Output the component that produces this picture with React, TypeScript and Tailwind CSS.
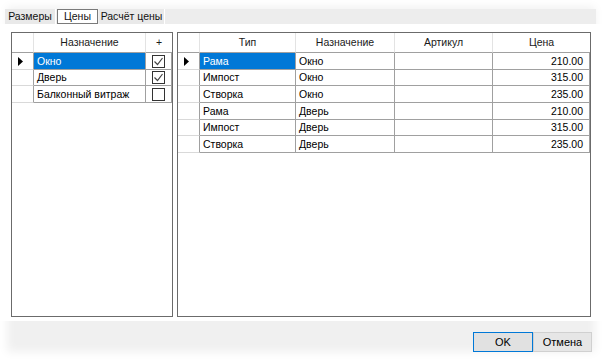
import { Fragment } from 'react';

const purposes = [
  { name: 'Окно', checked: true },
  { name: 'Дверь', checked: true },
  { name: 'Балконный витраж', checked: false },
];

const prices = [
  { type: 'Рама', purpose: 'Окно', article: '', price: '210.00' },
  { type: 'Импост', purpose: 'Окно', article: '', price: '315.00' },
  { type: 'Створка', purpose: 'Окно', article: '', price: '235.00' },
  { type: 'Рама', purpose: 'Дверь', article: '', price: '210.00' },
  { type: 'Импост', purpose: 'Дверь', article: '', price: '315.00' },
  { type: 'Створка', purpose: 'Дверь', article: '', price: '235.00' },
];

// 17/16/17 so that six rows come out near 100px like the original
const rowHeight = (i: number) => (i % 3 === 1 ? 'h-[16px]' : 'h-[17px]');

function RowArrow() {
  return (
    <svg width="5" height="9" viewBox="0 0 5 9" className="ml-[6px]">
      <path d="M0 0 L5 4.5 L0 9 Z" fill="#000" />
    </svg>
  );
}

function CheckBox({ checked }: { checked: boolean }) {
  return (
    <div className="w-[13px] h-[13px] border border-[#333] bg-white flex items-center justify-center">
      {checked && (
        <svg width="11" height="11" viewBox="0 0 11 11">
          <path d="M1.5 5.5 L4.5 8.5 L9.5 2" fill="none" stroke="#444" strokeWidth="1.2" />
        </svg>
      )}
    </div>
  );
}

function HeaderCell({ w, children, last }: { w: string; children?: React.ReactNode; last?: boolean }) {
  return (
    <div
      className={`${w} flex items-center justify-center border-b border-[#a0a0a0] ${
        last ? '' : 'border-r border-r-[#e3e3e3]'
      } text-[#1a1a1a]`}
    >
      {children}
    </div>
  );
}

function PurposeGrid() {
  return (
    <div className="w-[162px] h-[285px] border border-[#6b6b6b] bg-white">
      <div className="flex h-[20px]">
        <HeaderCell w="w-[22px]" />
        <HeaderCell w="w-[112px]">Назначение</HeaderCell>
        <HeaderCell w="w-[26px]" last>
          +
        </HeaderCell>
      </div>
      {purposes.map((p, i) => (
        <div key={p.name} className={`flex ${rowHeight(i)}`}>
          <div className="w-[22px] flex items-center border-r border-b border-[#a0a0a0] border-b-[#d9d9d9]">
            {i === 0 && <RowArrow />}
          </div>
          <div
            className={`w-[112px] flex items-center pl-[3px] border-r border-b border-[#a0a0a0] ${
              i === 0 ? 'bg-[#0078d7] text-white' : 'text-black'
            }`}
          >
            {p.name}
          </div>
          <div className="w-[26px] flex items-center justify-center border-r border-b border-[#a0a0a0]">
            <CheckBox checked={p.checked} />
          </div>
        </div>
      ))}
    </div>
  );
}

function PriceGrid() {
  return (
    <div className="w-[414px] h-[285px] border border-[#6b6b6b] bg-white">
      <div className="flex h-[20px]">
        <HeaderCell w="w-[22px]" />
        <HeaderCell w="w-[96px]">Тип</HeaderCell>
        <HeaderCell w="w-[99px]">Назначение</HeaderCell>
        <HeaderCell w="w-[98px]">Артикул</HeaderCell>
        <HeaderCell w="w-[97px]" last>
          Цена
        </HeaderCell>
      </div>
      {prices.map((r, i) => (
        <Fragment key={i}>
          <div className={`flex ${rowHeight(i)}`}>
            <div className="w-[22px] flex items-center border-r border-b border-[#a0a0a0] border-b-[#d9d9d9]">
              {i === 0 && <RowArrow />}
            </div>
            <div
              className={`w-[96px] flex items-center pl-[3px] border-r border-b border-[#a0a0a0] ${
                i === 0 ? 'bg-[#0078d7] text-white' : 'text-black'
              }`}
            >
              {r.type}
            </div>
            <div className="w-[99px] flex items-center pl-[3px] border-r border-b border-[#a0a0a0]">
              {r.purpose}
            </div>
            <div className="w-[98px] flex items-center pl-[3px] border-r border-b border-[#a0a0a0]">
              {r.article}
            </div>
            <div className="w-[97px] flex items-center justify-end pr-[6px] border-r border-b border-[#a0a0a0]">
              {r.price}
            </div>
          </div>
        </Fragment>
      ))}
    </div>
  );
}

export default function App() {
  return (
    <div
      className="w-[602px] h-[359px] bg-white overflow-hidden text-[10.5px] leading-none text-black"
      style={{ fontFamily: '"Liberation Sans", Arial, sans-serif' }}
    >
      <div className="h-full flex flex-col bg-[#f0f0f0] shadow-[inset_0_0_10px_7px_#fff]">
        {/* tabs */}
        <div className="flex h-[15px] mt-[9px] pl-[5px] pr-[6px]">
          <div className="w-[51px] flex items-center justify-center bg-[#e9e9e9] border-r border-white text-[#111]">
            Размеры
          </div>
          <div className="w-[41px] ml-[1px] flex items-center justify-center bg-white border border-[#7a7a7a] text-[#111]">
            Цены
          </div>
          <div className="w-[66px] ml-[1px] flex items-center justify-center bg-[#e9e9e9] border-r border-white text-[#111]">
            Расчёт цены
          </div>
          <div className="flex-1 bg-[#ededed]" />
        </div>

        {/* tab page */}
        <div className="h-[297px] bg-white pt-[8px] pl-[11px] flex gap-[4px]">
          <PurposeGrid />
          <PriceGrid />
        </div>

        {/* buttons */}
        <div className="flex-1 flex justify-end items-start pt-[11px] pr-[10px]">
          <button className="w-[60px] h-[20px] border border-[#0078d7] bg-[#e1e1e1] text-black text-[11px]">
            OK
          </button>
          <button className="w-[59px] h-[20px] border border-[#d0d0d0] bg-[#e6e6e6] text-black text-[11px]">
            Отмена
          </button>
        </div>
      </div>
    </div>
  );
}
